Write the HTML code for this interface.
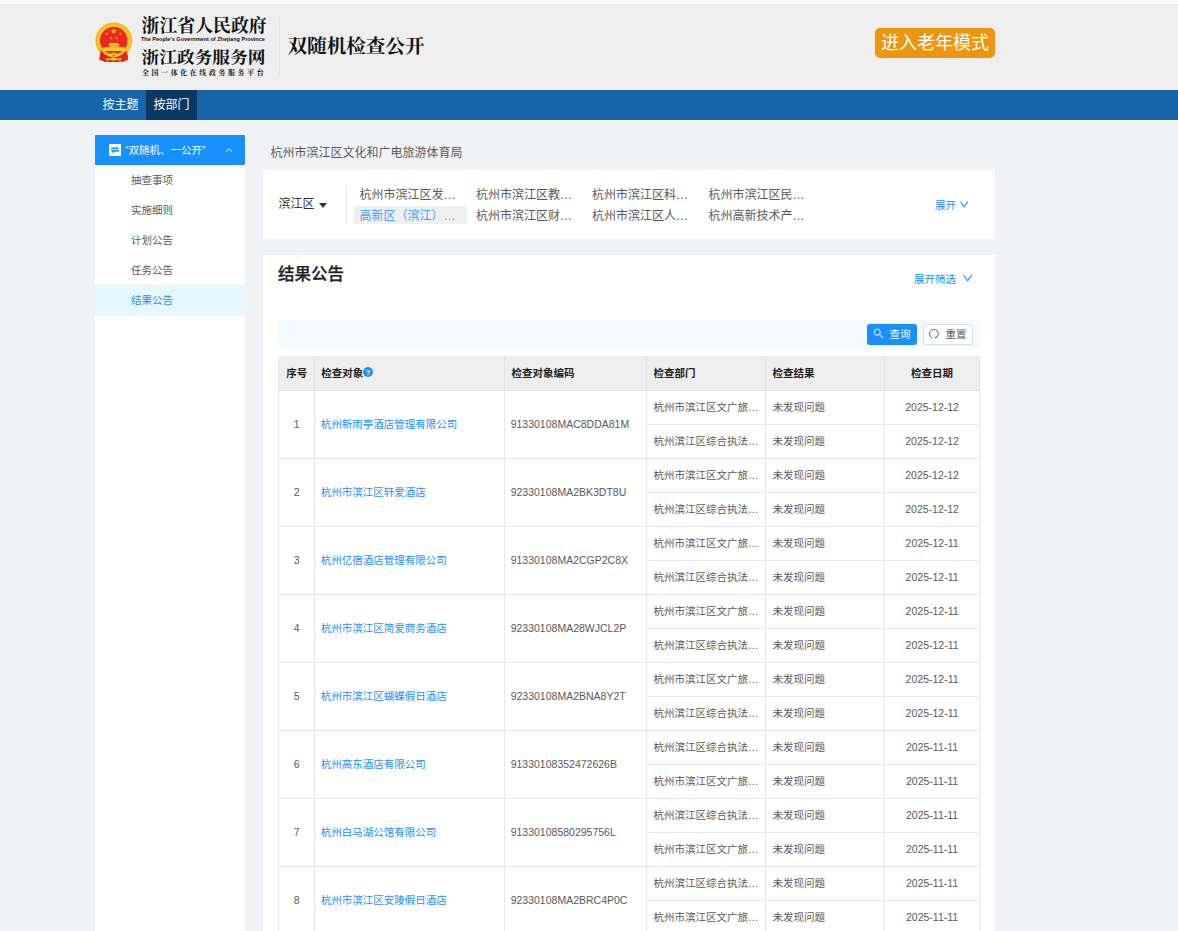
<!DOCTYPE html>
<html lang="zh-CN">
<head>
<meta charset="utf-8">
<title>双随机检查公开</title>
<style>
*{box-sizing:border-box;margin:0;padding:0}
html,body{width:1178px;height:931px;overflow:hidden}
body{position:relative;background:#f0f2f5;font-family:"Liberation Sans","Noto Sans CJK SC",sans-serif;font-size:10.5px;color:#595959;}
a{text-decoration:none;color:#1890ff}
.abs{position:absolute}
/* header */
#topstrip{left:0;top:0;width:1178px;height:3.75px;background:#fafafa}
#hdr{left:0;top:0;width:1178px;height:90px;background:#eeeeee}
.serif{font-family:"Liberation Serif","Noto Serif CJK SC",serif;font-weight:700;color:#111}
#l1{left:141.5px;top:13px;font-size:17.9px;line-height:26px;white-space:nowrap}
#l2{left:140.9px;top:35.5px;font-family:"Liberation Sans",sans-serif;font-weight:bold;font-size:5.54px;line-height:7px;color:#111;white-space:nowrap;letter-spacing:0}
#l3{left:141.5px;top:44px;font-size:17.7px;line-height:26px;white-space:nowrap;transform:scaleY(.92);transform-origin:50% 80%}
#l4{left:142px;top:67.5px;font-size:6.9px;line-height:10px;white-space:nowrap;letter-spacing:2.67px}
#vdiv{left:279px;top:18px;width:1px;height:58px;background:#e4e4e4}
#title{left:287.5px;top:32px;font-size:19.6px;line-height:30px;white-space:nowrap}
#elder{left:875px;top:28px;width:120px;height:30px;border-radius:5px;background:#ec960f;color:#fff;font-size:18px;line-height:31px;text-align:center;white-space:nowrap}
/* nav */
#nav{left:0;top:90px;width:1178px;height:30px;background:#1764a8}
#nav span{position:absolute;top:0;height:30px;line-height:31px;font-size:12px;color:#fff;text-align:center;width:51px}
#nav .t1{left:95px}
#nav .t2{left:146px;background:#0a3964}
/* sidebar */
#side{left:95px;top:135px;width:150.2px;height:796px;background:#fff}
#side .hd{position:relative;height:30px;background:#1890ff;color:#fff;line-height:30px;white-space:nowrap}
#side .hd .ic{position:absolute;left:14px;top:9px;width:12px;height:12px}
#side .hd .tx{position:absolute;left:30px;top:0}
#side .hd .ar{position:absolute;left:129.5px;top:11.5px;width:8px;height:6px}
#side .it{height:30px;line-height:30px;padding-left:36px;color:#595959}
#side .it.on{background:#e6f7ff;color:#1890ff}
/* breadcrumb */
#crumb{left:270.6px;top:143px;font-size:12px;line-height:20px;color:#595959;white-space:nowrap}
/* filter panel */
#filt{left:263px;top:170px;width:732px;height:68.75px;background:#fff}
#area{left:15.5px;top:24px;font-size:12px;line-height:20px;color:#333;white-space:nowrap}
#area i{display:inline-block;width:0;height:0;border-left:4px solid transparent;border-right:4px solid transparent;border-top:5px solid #333;margin-left:4px;vertical-align:0px}
#fdiv{left:83px;top:15px;width:1px;height:39px;background:#e8eaec}
.dp{position:absolute;width:113px;height:17.5px;line-height:20px;font-size:12px;color:#595959;padding-left:5.6px;white-space:nowrap}
.dp.on{background:#f0f0f0;color:#409eff}
#more{left:672px;top:25px;font-size:10.5px;line-height:20px;color:#1890ff;white-space:nowrap}
/* result panel */
#res{left:263px;top:255px;width:732px;height:676px;background:#fff}
#rt{left:15px;top:7px;font-size:16.5px;font-weight:500;-webkit-text-stroke:0.25px #222;color:#222;line-height:24px;white-space:nowrap}
#rf{left:651px;top:14px;font-size:10.5px;line-height:20px;color:#1890ff;white-space:nowrap}
#bar{left:15px;top:65px;width:702px;height:29px;background:#f5faff}
.btn{position:absolute;top:4px;height:21px;width:50px;border-radius:3px;font-size:10.5px;line-height:20px;white-space:nowrap}
#bq{left:589px;background:#1890ff;color:#fff}
#br{left:645px;background:#fff;border:1px solid #dcdee2;color:#595959;line-height:18px}
.btn svg{position:absolute}
.btn b{position:absolute;font-weight:normal}

#tb{left:15px;top:101px;width:702px;table-layout:fixed;border-collapse:separate;border-spacing:0;font-size:10.5px;color:#595959;border-top-left-radius:3px;border-top-right-radius:3px}
#tb th{height:34.5px;background:#eeeeee;font-weight:bold;color:#222;text-align:left;padding-left:6px;border-right:1px solid #e3e3e3;border-bottom:1px solid #e3e3e3;white-space:nowrap;vertical-align:middle}
#tb th:first-child{border-top-left-radius:3px;border-left:1px solid #e8e8e8}
#tb th:last-child{border-top-right-radius:3px}
#tb td{height:34px;padding-left:6px;border-right:1px solid #e8e8e8;border-bottom:1px solid #e8e8e8;white-space:nowrap;vertical-align:middle;overflow:hidden}
#tb td.n{border-left:1px solid #e8e8e8}
#tb .c{text-align:center;padding-left:0}
#tb td:not([rowspan]){padding-bottom:2px}
#tb td.c:not([rowspan]){padding-bottom:0}
#tb td.k{padding-left:5.2px}
#tb .q{margin-left:0;vertical-align:0px}
#tb td.m{padding-bottom:2px;padding-left:5.5px}
</style>
</head>
<body>
<div id="hdr" class="abs"></div>
<div id="topstrip" class="abs"></div>
<!--EM0--><svg id="emblem" class="abs" style="left:94px;top:21px;width:40px;height:42px" viewBox="94 21 40 42"><defs><radialGradient id="gr" cx="50%" cy="50%" r="50%"><stop offset="72%" stop-color="#f9cf2c"/><stop offset="100%" stop-color="#f1b814"/></radialGradient></defs><path d="M100.6 50.5L99.4 59.6L105.6 62.1L121.9 62.1L128.1 59.6L126.9 50.5Z" fill="#d9271b"/><circle cx="113.8" cy="40.8" r="18.4" fill="url(#gr)"/><circle cx="113.7" cy="40.6" r="13.8" fill="#eb2a22"/><polygon points="113.70,27.90 114.48,30.13 116.84,30.18 114.96,31.61 115.64,33.87 113.70,32.52 111.76,33.87 112.44,31.61 110.56,30.18 112.92,30.13" fill="#f7c51e"/><polygon points="107.65,32.60 107.45,33.66 108.37,34.21 107.30,34.35 107.06,35.39 106.60,34.42 105.53,34.51 106.31,33.78 105.90,32.79 106.84,33.30" fill="#f7c51e"/><polygon points="119.65,32.60 120.46,33.30 121.40,32.79 120.99,33.78 121.77,34.51 120.70,34.42 120.24,35.39 120.00,34.35 118.93,34.21 119.85,33.66" fill="#f7c51e"/><polygon points="111.61,36.69 111.60,37.76 112.60,38.15 111.57,38.47 111.51,39.54 110.89,38.66 109.86,38.94 110.50,38.08 109.92,37.18 110.93,37.52" fill="#f7c51e"/><polygon points="115.89,36.69 116.57,37.52 117.58,37.18 117.00,38.08 117.64,38.94 116.61,38.66 115.99,39.54 115.93,38.47 114.90,38.15 115.90,37.76" fill="#f7c51e"/><path d="M109.4 43.1H118V44.3H119.9L119.2 45.6H108.9L108.2 44.3H109.4Z" fill="#f9cf2c"/><path d="M109.2 45.6H118.9V47.4H109.2Z" fill="#f4be1c"/><path d="M103.2 47.4H124.2V51H105.6Z" fill="#f9cf2c"/><path d="M102.6 47.4H124.9L123.3 50.9H104.2Z" fill="#f8cb28"/><path d="M101.8 47.5A13.8 13.8 0 0 0 125.6 47.5" fill="none" stroke="none"/><path d="M101.2 50.2C103.5 53.4 107.5 56.2 112.2 56.9L113.7 57.6L113.7 62.1L105.6 62.1L99.4 59.6Z" fill="#da281b"/><path d="M126.3 50.2C124 53.4 120 56.2 115.2 56.9L113.7 57.6L113.7 62.1L121.9 62.1L128.1 59.6Z" fill="#da281b"/><path d="M106.6 62.2L107.4 60.6L108.2 62.2Z" fill="#eeeeee"/><path d="M119.2 62.2L120 60.6L120.8 62.2Z" fill="#eeeeee"/><path d="M103.4 51.6C106 55 109.8 56.4 113.7 56.4C117.6 56.4 121.4 55 124 51.6" fill="none" stroke="#f5c21e" stroke-width="1.5"/><path d="M110.6 55.6A3.1 3.1 0 0 1 116.8 55.6Z" fill="#f7c823"/><circle cx="113.7" cy="55.4" r="0.9" fill="#e0301e"/><ellipse cx="113.7" cy="58.9" rx="3.1" ry="1.5" fill="#f7c823"/><path d="M105.4 58.2L110.8 58.6L110.4 60L107 60.6Z" fill="#f7c823"/><path d="M122 58.2L116.6 58.6L117 60L120.4 60.6Z" fill="#f7c823"/></svg><!--EM1-->
<div id="l1" class="abs serif">浙江省人民政府</div>
<div id="l2" class="abs">The People's Government of Zhejiang Province</div>
<div id="l3" class="abs serif">浙江政务服务网</div>
<div id="l4" class="abs serif">全国一体化在线政务服务平台</div>
<div id="vdiv" class="abs"></div>
<div id="title" class="abs serif">双随机检查公开</div>
<div id="elder" class="abs">进入老年模式</div>
<div id="nav" class="abs"><span class="t1">按主题</span><span class="t2">按部门</span></div>

<div id="side" class="abs">
  <div class="hd">
    <svg class="ic" viewBox="0 0 12 12"><rect width="12" height="12" fill="#fff"/><path d="M2 3.5H7.2V1.9L10.3 5.2H2ZM10 6.1V7.8H4.8V9.9L1.7 6.1Z" fill="#1890ff"/></svg>
    <span class="tx">“双随机、一公开”</span>
    <svg class="ar" viewBox="0 0 8 6"><path d="M1 4.7L3.9 1.6L6.8 4.7" stroke="#fff" stroke-width="0.95" fill="none"/></svg>
  </div>
  <div class="it">抽查事项</div>
  <div class="it">实施细则</div>
  <div class="it">计划公告</div>
  <div class="it">任务公告</div>
  <div class="it on">结果公告</div>
</div>

<div id="crumb" class="abs">杭州市滨江区文化和广电旅游体育局</div>

<div id="filt" class="abs">
  <div id="area" class="abs">滨江区<i></i></div>
  <div id="fdiv" class="abs"></div>
  <div class="dp" style="left:91px;top:15px">杭州市滨江区发…</div>
  <div class="dp" style="left:207.3px;top:15px">杭州市滨江区教…</div>
  <div class="dp" style="left:323.5px;top:15px">杭州市滨江区科…</div>
  <div class="dp" style="left:439.8px;top:15px">杭州市滨江区民…</div>
  <div class="dp on" style="left:91px;top:36px">高新区（滨江）…</div>
  <div class="dp" style="left:207.3px;top:36px">杭州市滨江区财…</div>
  <div class="dp" style="left:323.5px;top:36px">杭州市滨江区人…</div>
  <div class="dp" style="left:439.8px;top:36px">杭州高新技术产…</div>
  <div id="more" class="abs">展开<svg style="position:absolute;left:25px;top:6.1px" width="9" height="7" viewBox="0 0 9 7"><path d="M0.5 0.8L4.2 5.9L7.9 0.8" stroke="#1890ff" stroke-width="1.1" fill="none"/></svg></div>
</div>

<div id="res" class="abs">
  <div id="rt" class="abs">结果公告</div>
  <div id="rf" class="abs">展开筛选<svg style="position:absolute;left:48.7px;top:5.1px" width="10" height="8" viewBox="0 0 10 8"><path d="M0.5 0.8L4.7 6.9L8.9 0.8" stroke="#1890ff" stroke-width="1.1" fill="none"/></svg></div>
  <div id="bar" class="abs">
    <div id="bq" class="btn"><svg style="left:5.5px;top:3.5px" width="11" height="11" viewBox="0 0 11 11"><circle cx="4.2" cy="4.2" r="3.1" stroke="#fff" stroke-width="0.95" fill="none"/><path d="M6.5 6.5L9.6 9.8" stroke="#fff" stroke-width="1.05"/></svg><b style="left:22.5px;top:0px">查询</b></div>
    <div id="br" class="btn"><svg style="left:4px;top:2.5px" width="12" height="12" viewBox="0 0 12 12"><path d="M3.99 9.89A4.4 4.4 0 1 1 8.05 9.71" stroke="#595959" stroke-width="0.9" fill="none"/><path d="M6.6 9.5L8.1 9.75L8.35 8.3" stroke="#595959" stroke-width="0.85" fill="none"/></svg><b style="left:21.5px;top:0px">重置</b></div>
  </div>
  <!--TB0--><table id="tb" class="abs" cellspacing="0" cellpadding="0">
<colgroup><col style="width:37.3px"><col style="width:190.2px"><col style="width:142px"><col style="width:119px"><col style="width:118.7px"><col style="width:94.8px"></colgroup>
<thead><tr><th class="c">序号</th><th>检查对象<svg class="q" width="10" height="10" viewBox="0 0 10 10"><circle cx="5" cy="5" r="5" fill="#1890ff"/><text x="5" y="7.9" font-size="7.6" font-weight="bold" fill="#fff" text-anchor="middle" font-family="Liberation Sans, sans-serif">?</text></svg></th><th>检查对象编码</th><th>检查部门</th><th>检查结果</th><th class="c">检查日期</th></tr></thead>
<tbody>
<tr><td rowspan="2" class="c n">1</td><td rowspan="2" class="m"><a>杭州新雨亭酒店管理有限公司</a></td><td rowspan="2" class="k">91330108MAC8DDA81M</td><td>杭州市滨江区文广旅…</td><td>未发现问题</td><td class="c">2025-12-12</td></tr>
<tr><td>杭州滨江区综合执法…</td><td>未发现问题</td><td class="c">2025-12-12</td></tr>
<tr><td rowspan="2" class="c n">2</td><td rowspan="2" class="m"><a>杭州市滨江区轩爱酒店</a></td><td rowspan="2" class="k">92330108MA2BK3DT8U</td><td>杭州市滨江区文广旅…</td><td>未发现问题</td><td class="c">2025-12-12</td></tr>
<tr><td>杭州滨江区综合执法…</td><td>未发现问题</td><td class="c">2025-12-12</td></tr>
<tr><td rowspan="2" class="c n">3</td><td rowspan="2" class="m"><a>杭州亿宿酒店管理有限公司</a></td><td rowspan="2" class="k">91330108MA2CGP2C8X</td><td>杭州市滨江区文广旅…</td><td>未发现问题</td><td class="c">2025-12-11</td></tr>
<tr><td>杭州滨江区综合执法…</td><td>未发现问题</td><td class="c">2025-12-11</td></tr>
<tr><td rowspan="2" class="c n">4</td><td rowspan="2" class="m"><a>杭州市滨江区简爱商务酒店</a></td><td rowspan="2" class="k">92330108MA28WJCL2P</td><td>杭州市滨江区文广旅…</td><td>未发现问题</td><td class="c">2025-12-11</td></tr>
<tr><td>杭州滨江区综合执法…</td><td>未发现问题</td><td class="c">2025-12-11</td></tr>
<tr><td rowspan="2" class="c n">5</td><td rowspan="2" class="m"><a>杭州市滨江区蝴蝶假日酒店</a></td><td rowspan="2" class="k">92330108MA2BNA8Y2T</td><td>杭州市滨江区文广旅…</td><td>未发现问题</td><td class="c">2025-12-11</td></tr>
<tr><td>杭州滨江区综合执法…</td><td>未发现问题</td><td class="c">2025-12-11</td></tr>
<tr><td rowspan="2" class="c n">6</td><td rowspan="2" class="m"><a>杭州高东酒店有限公司</a></td><td rowspan="2" class="k">91330108352472626B</td><td>杭州滨江区综合执法…</td><td>未发现问题</td><td class="c">2025-11-11</td></tr>
<tr><td>杭州市滨江区文广旅…</td><td>未发现问题</td><td class="c">2025-11-11</td></tr>
<tr><td rowspan="2" class="c n">7</td><td rowspan="2" class="m"><a>杭州白马湖公馆有限公司</a></td><td rowspan="2" class="k">91330108580295756L</td><td>杭州滨江区综合执法…</td><td>未发现问题</td><td class="c">2025-11-11</td></tr>
<tr><td>杭州市滨江区文广旅…</td><td>未发现问题</td><td class="c">2025-11-11</td></tr>
<tr><td rowspan="2" class="c n">8</td><td rowspan="2" class="m"><a>杭州市滨江区安陵假日酒店</a></td><td rowspan="2" class="k">92330108MA2BRC4P0C</td><td>杭州滨江区综合执法…</td><td>未发现问题</td><td class="c">2025-11-11</td></tr>
<tr><td>杭州市滨江区文广旅…</td><td>未发现问题</td><td class="c">2025-11-11</td></tr>
</tbody></table><!--TB1-->
</div>
</body>
</html>
